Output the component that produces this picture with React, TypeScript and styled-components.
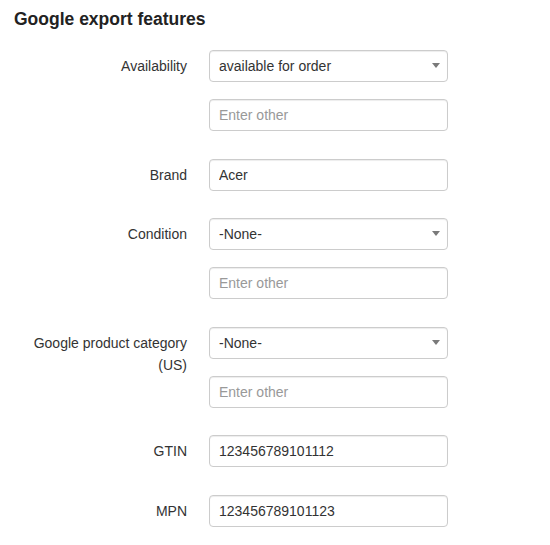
import React from "react";
import styled, { createGlobalStyle } from "styled-components";

const Global = createGlobalStyle`
  html, body { margin: 0; padding: 0; background: #fff; }
  body { font-family: "Liberation Sans", Arial, sans-serif; color: #333; }
  * { box-sizing: border-box; }
`;

const Page = styled.div`
  padding: 10px 0 0 14px;
  width: 550px;
`;

const Heading = styled.h3`
  margin: 0 0 21px 0;
  font-size: 17.5px;
  line-height: 19px;
  font-weight: bold;
  color: #222;
`;

const Group = styled.div`
  display: grid;
  grid-template-columns: 173px 239px;
  column-gap: 22px;
  margin-bottom: 27.5px;
`;

const Label = styled.label`
  text-align: right;
  font-size: 14px;
  line-height: 22px;
  padding-top: 5px;
  color: #333;
`;

const Controls = styled.div`
  display: flex;
  flex-direction: column;
  gap: 17px;
`;

const fieldBase = `
  display: block;
  width: 100%;
  height: 32px;
  margin: 0;
  padding: 0 9px;
  font-family: "Liberation Sans", Arial, sans-serif;
  font-size: 14px;
  color: #333;
  background: #fff;
  border: 1px solid #ccc;
  border-radius: 4px;
  box-shadow: inset 0 1px 1px rgba(0, 0, 0, 0.075);
  outline: none;
`;

const Input = styled.input`
  ${fieldBase}
  &::placeholder { color: #999; opacity: 1; }
`;

const SelectWrap = styled.div`
  position: relative;
  &::after {
    content: "";
    position: absolute;
    right: 8px;
    top: 13px;
    width: 0;
    height: 0;
    border-left: 4.5px solid transparent;
    border-right: 4.5px solid transparent;
    border-top: 5px solid #7a7a7a;
    pointer-events: none;
  }
`;

const Select = styled.select`
  ${fieldBase}
  appearance: none;
  -webkit-appearance: none;
  padding-right: 24px;
`;

type Row = {
  label: string;
  kind: "select" | "input";
  value: string;
  options?: string[];
  other?: boolean;
};

const rows: Row[] = [
  { label: "Availability", kind: "select", value: "available for order", options: ["available for order", "in stock", "out of stock", "preorder"], other: true },
  { label: "Brand", kind: "input", value: "Acer" },
  { label: "Condition", kind: "select", value: "-None-", options: ["-None-", "new", "used", "refurbished"], other: true },
  { label: "Google product category (US)", kind: "select", value: "-None-", options: ["-None-"], other: true },
  { label: "GTIN", kind: "input", value: "123456789101112" },
  { label: "MPN", kind: "input", value: "123456789101123" },
];

export default function App() {
  return (
    <>
      <Global />
      <Page>
        <Heading>Google export features</Heading>
        {rows.map((r) => (
          <Group key={r.label}>
            <Label>{r.label}</Label>
            <Controls>
              {r.kind === "select" ? (
                <SelectWrap>
                  <Select defaultValue={r.value}>
                    {r.options!.map((o) => (
                      <option key={o} value={o}>{o}</option>
                    ))}
                  </Select>
                </SelectWrap>
              ) : (
                <Input defaultValue={r.value} />
              )}
              {r.other && <Input placeholder="Enter other" />}
            </Controls>
          </Group>
        ))}
      </Page>
    </>
  );
}
